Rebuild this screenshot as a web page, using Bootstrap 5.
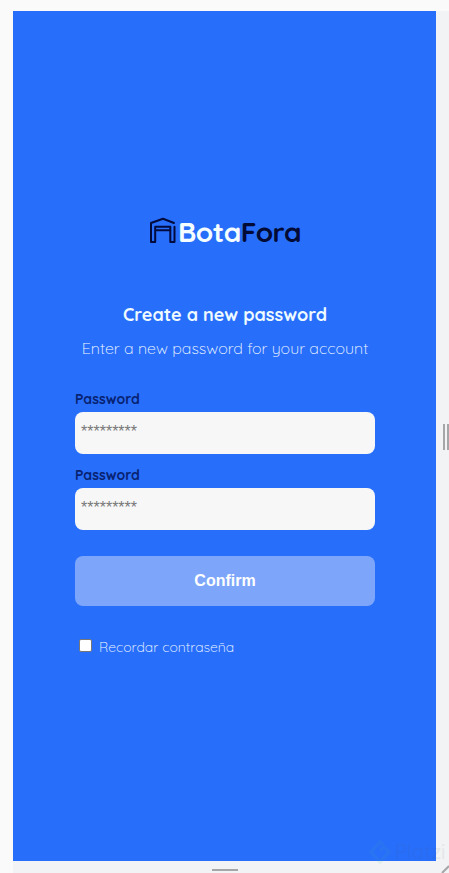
<!DOCTYPE html>
<html lang="en">
<head>
<meta charset="utf-8">
<meta name="viewport" content="width=device-width, initial-scale=1">
<title>BotaFora</title>
<link href="https://cdn.jsdelivr.net/npm/bootstrap@5.3.0/dist/css/bootstrap.min.css" rel="stylesheet">
<style>
body{font-family:Quicksand,Lato,"Liberation Sans",sans-serif;background:#f1f3f4;height:873px;overflow:hidden}
.stage{height:873px;padding:11px 13px 12px;background:linear-gradient(#fafafa,#fafafa) 0 0/13px 100% no-repeat,linear-gradient(#fafafa,#fafafa) 0 0/100% 11px no-repeat,#f1f3f4}
.screen{height:850px;background:#276efb;padding:201px 61px 0 62px}
.logo{height:40px;padding-left:75px}
.brand{font-size:28px;line-height:40px;font-weight:700;white-space:nowrap;margin-left:2px;letter-spacing:-.5px}
.bota{color:#f4fdff}
.fora{color:#020b35}
.heading{font-size:18px;line-height:24px;font-weight:700;color:#eefaff;margin-top:51px;white-space:nowrap}
.subtitle{font-size:16px;line-height:20px;font-weight:300;color:#f4fbff;margin-top:11px;white-space:nowrap}
.field-label{font-size:14px;line-height:18px;font-weight:700;color:#07226f;margin-bottom:4px}
.second{margin-top:12px}
.form-control.secret{height:42px;border:0;border-radius:8px;background:#f7f7f7;padding:0 6px 2px;font:16px "Liberation Sans",Arial,sans-serif}
.secret::placeholder{color:#777}
.btn.confirm{height:50px;border:0;border-radius:8px;background:#7da6fa;color:#fff;font:700 16px "Liberation Sans",Arial,sans-serif;margin-top:26px}
.form-check-input.remember{width:13px;height:13px;margin:0 0 3px;border:1px solid #767676;border-radius:2px;background-color:#fff}
.remember-label{font-size:14px;line-height:18px;font-weight:300;color:#f4fbff;margin-left:7px}
.grip-right{right:0;top:424px;width:6px;height:26px;border-left:2px solid #a5a6a7;border-right:2px solid #a5a6a7}
.grip-bottom{left:212px;top:869px;width:26px;height:2px;background:#a5a6a7}
.grip-corner{right:0;bottom:0}
.watermark{left:369px;top:838px;opacity:.08;color:#506070;font-size:20px;line-height:28px;font-weight:500}
</style>
</head>
<body>
<main class="stage position-relative">
  <section class="screen">
    <div class="logo d-flex">
      <svg width="26" height="27" viewBox="0 0 26 27" fill="none" stroke="#030b3c" stroke-width="2" stroke-linejoin="round" stroke-linecap="round" class="flex-shrink-0 mt-1"><path d="M24 7 13 2.7 1 7V26H5.2V10.8H20.3V26H24.5V10.8M5.5 14.2H20"/></svg>
      <div class="brand"><span class="bota">Bota</span><span class="fora">Fora</span></div>
    </div>
    <h1 class="heading text-center mb-0">Create a new password</h1>
    <p class="subtitle text-center mb-0">Enter a new password for your account</p>
    <form class="d-flex flex-column pt-4">
      <label class="field-label mt-2" for="p1">Password</label>
      <input class="form-control secret" id="p1" type="password" placeholder="*********">
      <label class="field-label second" for="p2">Password</label>
      <input class="form-control secret" id="p2" type="password" placeholder="*********">
      <button class="btn confirm w-100" type="button">Confirm</button>
      <div class="d-flex align-items-center mt-4 ms-1 pt-2">
        <input class="form-check-input remember" id="r" type="checkbox">
        <label class="remember-label" for="r">Recordar contraseña</label>
      </div>
    </form>
  </section>
  <div class="grip-right position-absolute"></div>
  <div class="grip-bottom position-absolute"></div>
  <svg class="grip-corner position-absolute" width="8" height="8" stroke="#a5a6a7" stroke-width="2"><path d="M1 8 8 1"/></svg>
  <div class="watermark position-absolute d-flex align-items-center"><svg width="22" height="24" viewBox="0 0 22 24" fill="none" stroke="#45b995" stroke-width="3.5"><path d="M14 5 11 2 2 12l9 10 9-10-5-5-4 4"/></svg><span class="ms-1">Platzi</span></div>
</main>
<script src="https://cdn.jsdelivr.net/npm/bootstrap@5.3.0/dist/js/bootstrap.bundle.min.js"></script>
</body>
</html>
